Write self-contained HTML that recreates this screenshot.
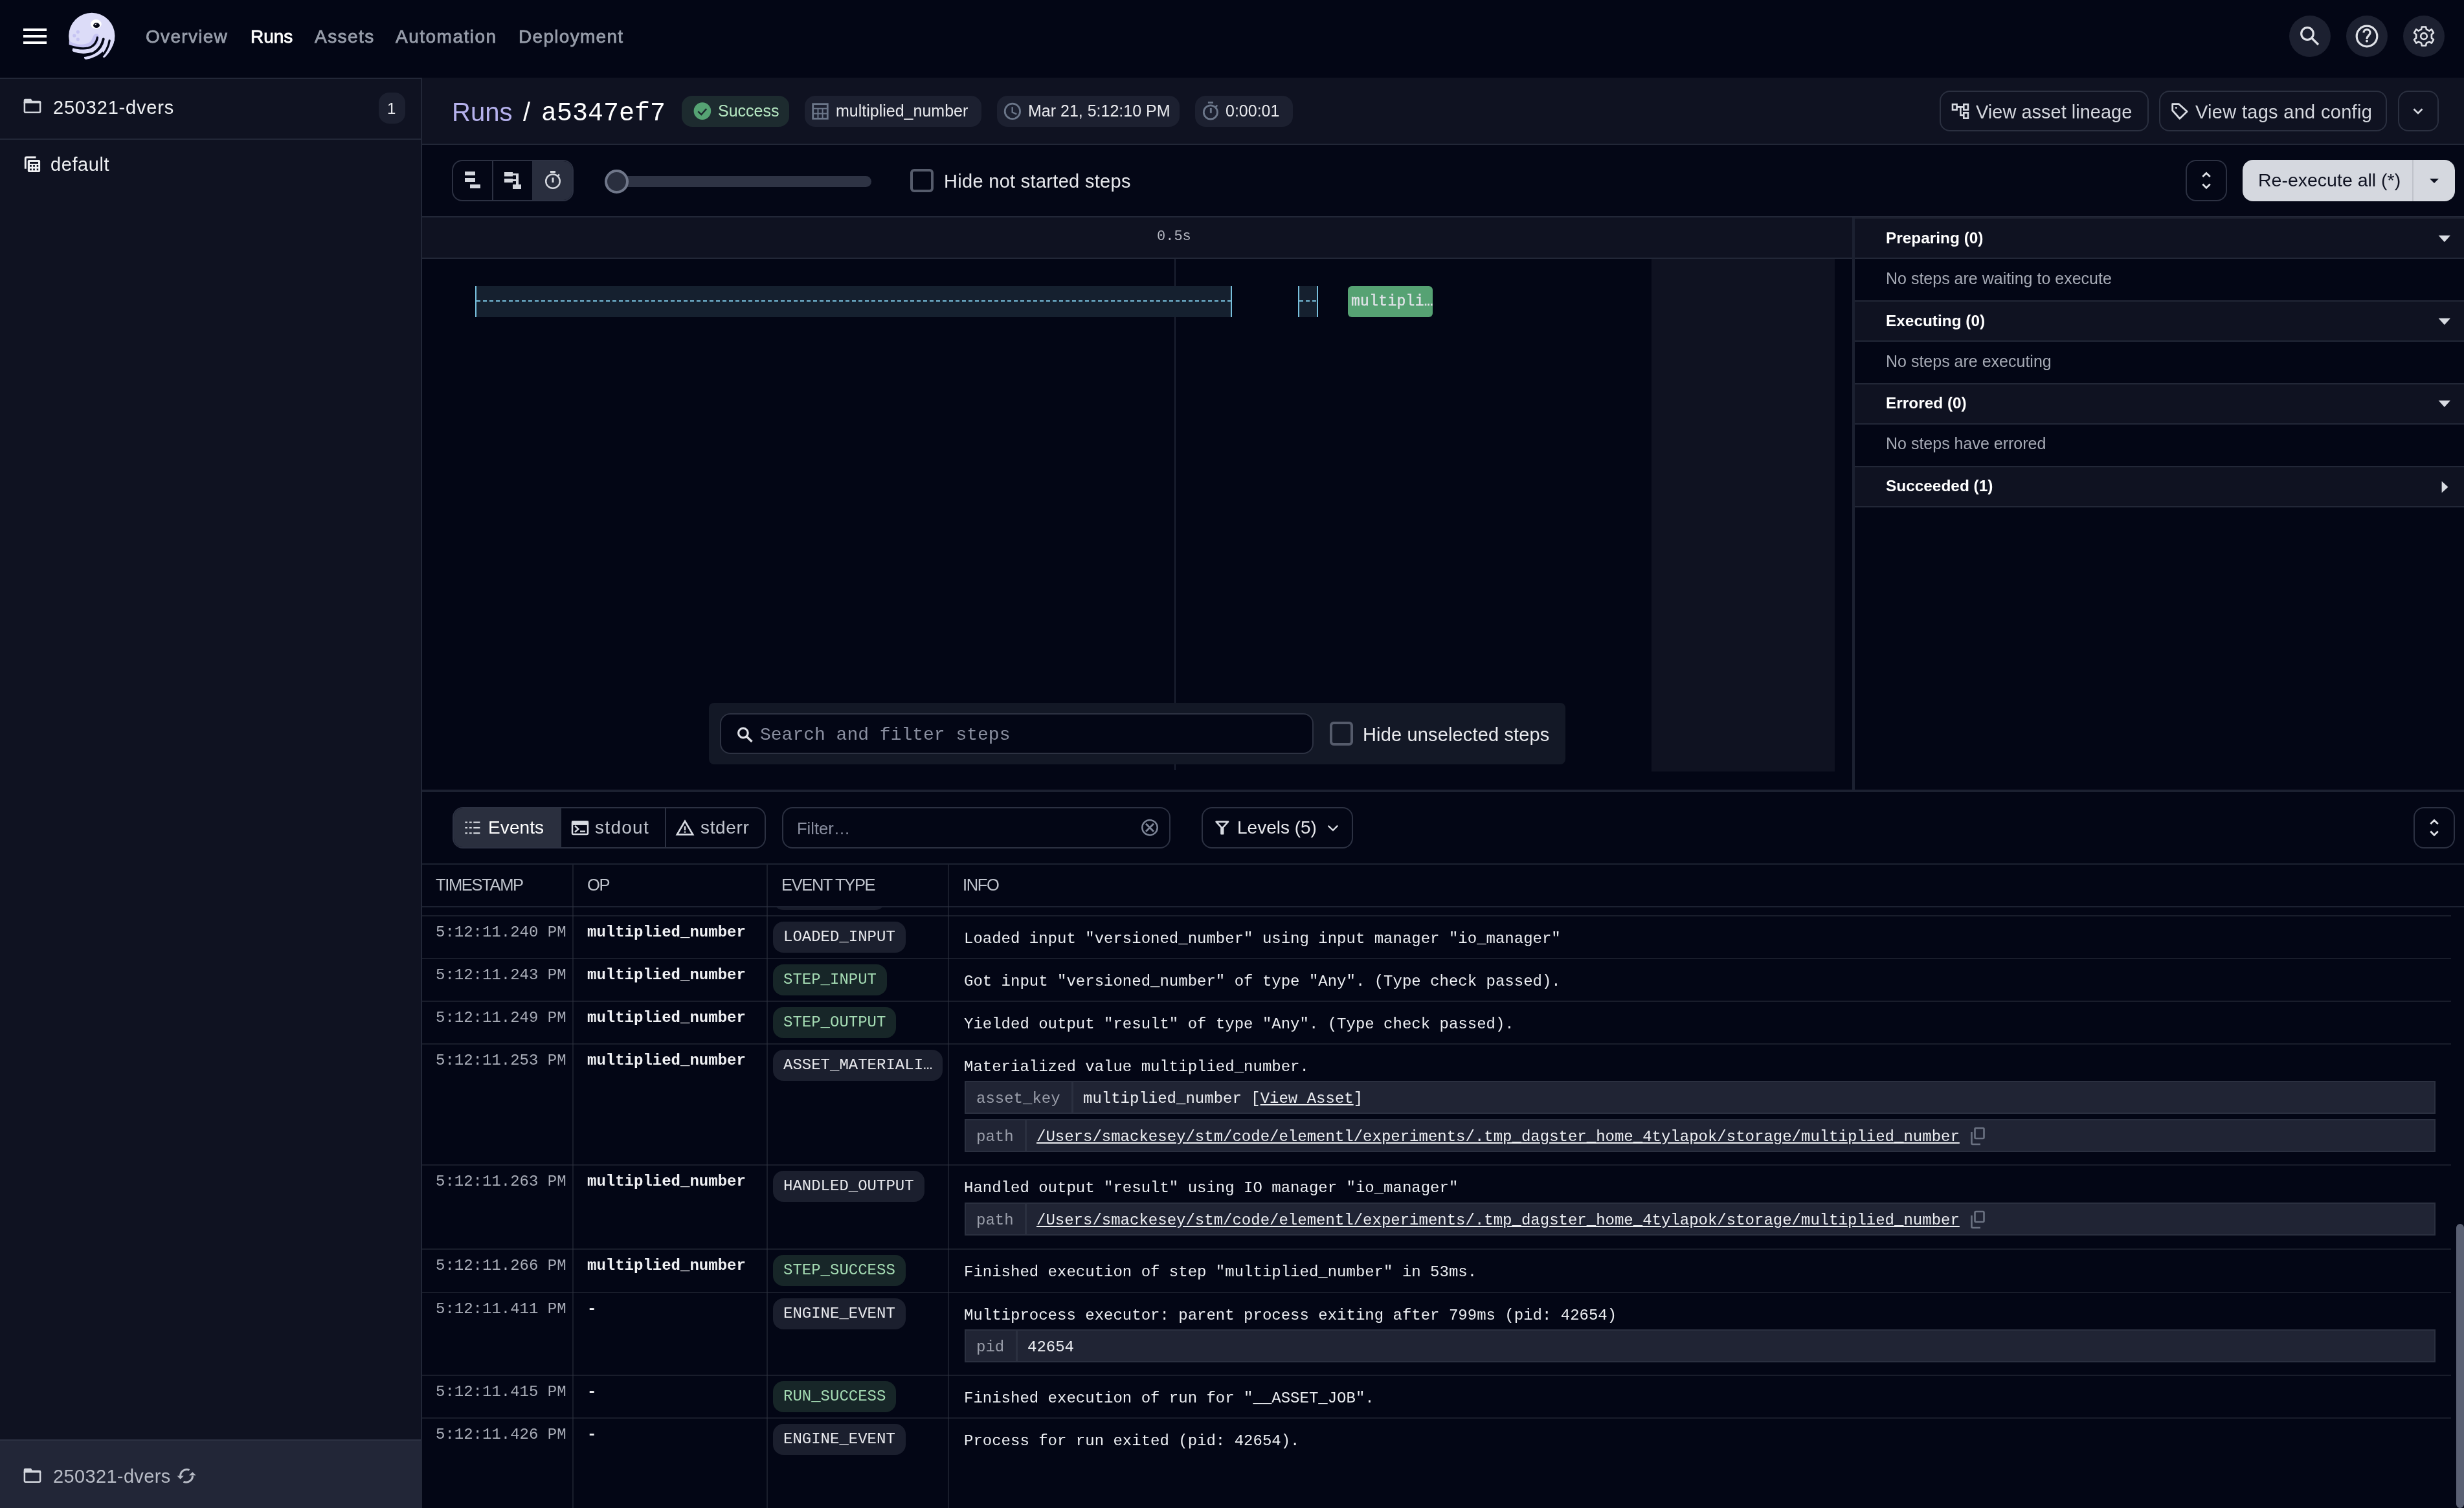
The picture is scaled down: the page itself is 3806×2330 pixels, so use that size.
<!DOCTYPE html>
<html><head><meta charset="utf-8">
<style>
*{box-sizing:border-box;margin:0;padding:0}
html,body{width:3806px;height:2330px;overflow:hidden;background:#030615}
body{position:relative;font-family:"Liberation Sans",sans-serif;color:#e8e9ed}
.a{position:absolute}
.t{position:absolute;line-height:1;white-space:nowrap}
.m{font-family:"Liberation Mono",monospace}
.b{font-weight:bold}
svg{position:absolute;overflow:visible}
.nav{font-size:28px;-webkit-text-stroke:0.8px currentColor}
</style></head><body><div id="root" style="position:absolute;left:0;top:0;width:3806px;height:2330px;overflow:hidden;will-change:transform;background:#030615">

<!-- ===== NAV ===== -->
<div class="a" style="left:0;top:0;width:3806px;height:120px;background:#030615"></div>
<div class="a" style="left:36px;top:44px;width:36px;height:4px;background:#fff"></div>
<div class="a" style="left:36px;top:54px;width:36px;height:4px;background:#fff"></div>
<div class="a" style="left:36px;top:64px;width:36px;height:4px;background:#fff"></div>
<svg style="left:100px;top:14px" width="84" height="84" viewBox="0 0 1508 1508">
<circle cx="750" cy="745" r="640" fill="#dcdcf8"/>
<path d="M120 880 C300 1010 560 1010 690 920 C770 860 760 760 830 700 C880 660 950 690 950 760 L930 1000 L520 1140 L120 1000 Z" fill="#c6c4f3"/>
<path d="M0 990 L140 990 L262 1135 L450 1190 L650 1190 L820 1120 L590 1345 L850 1290 L1050 1150 L1090 1290 L1290 1030 L1508 1030 L1508 1508 L0 1508 Z" fill="#030615"/>
<g fill="none" stroke="#dcdcf8" stroke-linecap="round" stroke-width="104">
<path d="M262 1135 C450 1205 700 1200 880 1080 C990 990 1040 900 1065 790"/>
<path d="M590 1345 C820 1300 1020 1170 1130 1010 C1190 920 1225 860 1240 780"/>
<path d="M1090 1290 C1200 1170 1290 1030 1325 860"/>
</g>
<g fill="none" stroke="#030615" stroke-linecap="round" stroke-width="58">
<path d="M905 790 C880 930 800 1040 650 1080 C480 1115 340 1090 150 1030"/>
<path d="M1072 835 C1040 990 960 1120 820 1205 C720 1265 620 1290 470 1300" stroke-width="70"/>
<path d="M1242 875 C1220 1020 1160 1160 1030 1310"/>
</g>
<circle cx="365" cy="635" r="46" fill="#c6c4f3"/><circle cx="265" cy="735" r="46" fill="#c6c4f3"/><circle cx="365" cy="840" r="46" fill="#c6c4f3"/>
<ellipse cx="868" cy="418" rx="150" ry="130" fill="#ffffff"/>
<ellipse cx="880" cy="452" rx="88" ry="70" fill="#030615"/>
<path d="M820 440 L870 400 L875 445 Z" fill="#ffffff"/>
</svg>
<div class="t nav" style="left:225px;top:43px;letter-spacing:1.3px;color:#979daa">Overview</div>
<div class="t nav" style="left:387px;top:43px;letter-spacing:0px;color:#ffffff">Runs</div>
<div class="t nav" style="left:486px;top:43px;letter-spacing:1.45px;color:#979daa">Assets</div>
<div class="t nav" style="left:611px;top:43px;letter-spacing:1.5px;color:#979daa">Automation</div>
<div class="t nav" style="left:801px;top:43px;letter-spacing:1.3px;color:#979daa">Deployment</div>
<div class="a" style="left:3536px;top:24px;width:64px;height:64px;border-radius:50%;background:#1c2030"></div>
<div class="a" style="left:3624px;top:24px;width:64px;height:64px;border-radius:50%;background:#1c2030"></div>
<div class="a" style="left:3712px;top:24px;width:64px;height:64px;border-radius:50%;background:#1c2030"></div>
<svg style="left:3450px;top:0" width="356" height="120" viewBox="0 0 356 120"><g fill="none" stroke="#dfe1e7" stroke-width="3.2"><circle cx="114" cy="52" r="9.3"/><path d="M120.5 58.5 L131 69"/><circle cx="206" cy="56" r="15.8"/><path d="M201 50.5 C201 44 211 44 211 50.5 C211 55 206 55 206 60"/></g><circle cx="206" cy="63.5" r="2" fill="#dfe1e7"/>
<g transform="translate(294 56) scale(0.88)"><path d="M-3.5 -16.5 H3.5 L4.5 -12 L9.5 -9.5 L13.5 -12 L17 -6 L13.5 -3 V3 L17 6 L13.5 12 L9.5 9.5 L4.5 12 L3.5 16.5 H-3.5 L-4.5 12 L-9.5 9.5 L-13.5 12 L-17 6 L-13.5 3 V-3 L-17 -6 L-13.5 -12 L-9.5 -9.5 L-4.5 -12 Z" fill="none" stroke="#dfe1e7" stroke-width="3" stroke-linejoin="round"/><circle r="5.5" fill="none" stroke="#dfe1e7" stroke-width="3"/></g></svg>

<!-- ===== SIDEBAR ===== -->
<div class="a" style="left:0;top:120px;width:652px;height:2210px;background:#0f1221;border-top:2px solid #222737;border-right:2px solid #222737"></div>
<div class="a" style="left:0;top:214px;width:650px;height:2px;background:#222737"></div>
<svg style="left:30px;top:140px" width="44" height="44" viewBox="0 0 44 44"><path d="M6.7 15 Q6.7 12.8 9 12.8 L18 12.8 L19.8 15.9 L31 15.9 Q33.3 15.9 33.3 18.2 L33.3 19.6 L6.7 19.6 Z" fill="#d4d7de"/><rect x="7.9" y="17" width="24.2" height="16.8" rx="1.2" fill="none" stroke="#d4d7de" stroke-width="2.5"/></svg>
<svg style="left:30px;top:232px" width="44" height="44" viewBox="0 0 44 44"><path d="M9.3 28.7 Q9.3 28 9.3 13 Q9.3 11 11.3 11 L25.5 11" fill="none" stroke="#f0f0f3" stroke-width="2.9"/><path fill="#f0f0f3" fill-rule="evenodd" d="M15 14.9 H30 Q32.1 14.9 32.1 17 V32 Q32.1 34.1 30 34.1 H15 Q12.8 34.1 12.8 32 V17 Q12.8 14.9 15 14.9 Z M16 18.1 V20.9 H29 V18.1 Z M16 23 V25.8 H18.8 V23 Z M21.2 23 V25.8 H23.9 V23 Z M26.7 23 V25.8 H29.2 V23 Z M16 28.6 V31.2 H18.8 V28.6 Z M21.2 28.6 V31.2 H23.9 V28.6 Z M26.7 28.6 V31.2 H29.2 V28.6 Z"/></svg>

<div class="t" style="left:82px;top:152px;font-size:29px;letter-spacing:0.8px;color:#eef0f3">250321-dvers</div>
<div class="a" style="left:585px;top:143px;width:41px;height:48px;border-radius:16px;background:#1c2030"></div>
<div class="t" style="left:598px;top:156px;font-size:24px;color:#e8e9ed">1</div>
<div class="t" style="left:78px;top:240px;font-size:29px;letter-spacing:0.6px;color:#eef0f3">default</div>
<div class="a" style="left:0;top:2224px;width:650px;height:106px;background:#222637;border-top:2px solid #2c3142"></div>
<div class="t" style="left:82px;top:2267px;font-size:29px;letter-spacing:0.35px;color:#b8bcc6">250321-dvers</div>
<svg style="left:30px;top:2256px" width="44" height="44" viewBox="0 0 44 44"><path d="M6.7 15 Q6.7 12.8 9 12.8 L18 12.8 L19.8 15.9 L31 15.9 Q33.3 15.9 33.3 18.2 L33.3 19.6 L6.7 19.6 Z" fill="#d4d7de"/><rect x="7.9" y="17" width="24.2" height="16.8" rx="1.2" fill="none" stroke="#d4d7de" stroke-width="2.5"/></svg>
<svg style="left:262px;top:2256px" width="50" height="50" viewBox="0 0 50 50"><g fill="none" stroke="#b8bcc6" stroke-width="3"><path d="M30.5 15.3 A10 10 0 0 0 16.6 25"/><path d="M21.5 33.3 A10 10 0 0 0 35.5 24"/></g><path d="M11.4 24.3 H21.9 L16.6 29.4 Z M30 23.4 H40.6 L35.4 18.4 Z" fill="#b8bcc6"/></svg>

<!-- ===== HEADER ===== -->
<div class="a" style="left:652px;top:120px;width:3154px;height:104px;background:#0f1221;border-bottom:2px solid #222737"></div>
<div class="t" style="left:698px;top:153px;font-size:40px;color:#b5b1ec">Runs</div>
<div class="t" style="left:808px;top:153px;font-size:40px;color:#ffffff">/</div>
<div class="t m" style="left:836px;top:156px;font-size:40px;color:#ffffff">a5347ef7</div>


<!-- tags -->
<div class="a" style="left:1053px;top:148px;width:166px;height:48px;border-radius:16px;background:#1d2b2f"></div>
<svg style="left:1062px;top:150px" width="44" height="44" viewBox="0 0 44 44"><circle cx="22.9" cy="21.6" r="13.3" fill="#55a373"/><path d="M16.3 22.2 L21.3 27.1 L29.2 18.1" fill="none" stroke="#1d2b2f" stroke-width="2.4"/></svg>
<div class="t" style="left:1109px;top:159px;font-size:25px;color:#b6e8c2">Success</div>
<div class="a" style="left:1243px;top:148px;width:273px;height:48px;border-radius:16px;background:#1c2030"></div>
<svg style="left:1245px;top:150px" width="44" height="44" viewBox="0 0 44 44"><g fill="none" stroke="#6b7689"><rect x="10.7" y="10.7" width="22.6" height="22.6" stroke-width="2.8"/><path d="M10.7 17.8 H33.3 M10.7 25.4 H33.3 M18.5 17.8 V33.3 M25.6 17.8 V33.3" stroke-width="2"/></g></svg>
<div class="t" style="left:1291px;top:159px;font-size:25px;color:#e8e9ed">multiplied_number</div>
<div class="a" style="left:1540px;top:148px;width:282px;height:48px;border-radius:16px;background:#1c2030"></div>
<svg style="left:1542px;top:150px" width="44" height="44" viewBox="0 0 44 44"><g fill="none" stroke="#6b7689"><circle cx="21.9" cy="21.9" r="11.7" stroke-width="2.8"/><path d="M21.7 15.2 V23.5 L28.3 26.4" stroke-width="2.4"/></g></svg>
<div class="t" style="left:1588px;top:159px;font-size:25px;color:#e8e9ed">Mar 21, 5:12:10 PM</div>
<div class="a" style="left:1846px;top:148px;width:151px;height:48px;border-radius:16px;background:#1c2030"></div>
<svg style="left:1848px;top:148px" width="44" height="44" viewBox="0 0 44 44"><g fill="none" stroke="#6b7689"><circle cx="21.9" cy="25.4" r="10.6" stroke-width="2.8"/><path d="M22.3 19 V26.8" stroke-width="2.9"/><path d="M17.9 10.4 H26" stroke-width="2.8"/><path d="M29.5 17.5 L32.3 14.7" stroke-width="2.6"/></g></svg>
<div class="t" style="left:1893px;top:159px;font-size:25px;color:#e8e9ed">0:00:01</div>
<!-- header buttons -->
<div class="a" style="left:2996px;top:140px;width:323px;height:63px;border-radius:16px;border:2px solid #2b3040"></div>
<svg style="left:3006px;top:150px" width="44" height="44" viewBox="0 0 44 44"><g fill="none" stroke="#d8dbe2" stroke-width="2.6"><rect x="10" y="11.2" width="6.6" height="8.4"/><rect x="27.3" y="11.2" width="6.6" height="8.4"/><rect x="27.3" y="24.3" width="6.6" height="8.4"/><path d="M16.6 15.4 H27.3 M22.4 15.4 V27.9 H27.3"/></g></svg>
<div class="t" style="left:3052px;top:159px;font-size:29px;color:#d4d7de">View asset lineage</div>
<div class="a" style="left:3335px;top:140px;width:352px;height:63px;border-radius:16px;border:2px solid #2b3040"></div>
<svg style="left:3345px;top:150px" width="44" height="44" viewBox="0 0 44 44"><path d="M10.7 10.7 H20.5 L33.2 22.2 L21.9 33.3 L10.7 20.8 Z" fill="none" stroke="#d8dbe2" stroke-width="2.8" stroke-linejoin="round"/><circle cx="16.4" cy="16.4" r="1.5" fill="#d8dbe2"/></svg>
<div class="t" style="left:3391px;top:159px;font-size:29px;letter-spacing:0.3px;color:#d4d7de">View tags and config</div>
<div class="a" style="left:3704px;top:140px;width:63px;height:63px;border-radius:16px;border:2px solid #2b3040"></div>
<svg style="left:3715px;top:152px" width="40" height="40" viewBox="0 0 40 40"><path d="M13.5 16.5 L20 23 L26.5 16.5" fill="none" stroke="#d8dbe2" stroke-width="2.6"/></svg>

<!-- ===== GANTT TOOLBAR ===== -->
<div class="a" style="left:652px;top:224px;width:3154px;height:112px;background:#040716;border-bottom:2px solid #222737"></div>
<div class="a" style="left:698px;top:247px;width:188px;height:64px;border-radius:16px;border:2px solid #2c3142;overflow:hidden"><div class="a" style="left:122px;top:0;width:64px;height:60px;background:#292e3e"></div><div class="a" style="left:60px;top:0;width:2px;height:60px;background:#2c3142"></div></div>
<svg style="left:695px;top:244px" width="195" height="70" viewBox="0 0 195 70"><g fill="#d4d7de"><rect x="23" y="21" width="16" height="6"/><rect x="23" y="31" width="16" height="6"/><rect x="31" y="41" width="16" height="6"/><rect x="84" y="22" width="13" height="6.5"/><rect x="84" y="32" width="13" height="6"/><rect x="97" y="41" width="13" height="7"/><rect x="102" y="24" width="4" height="18"/><rect x="97" y="24" width="6" height="3"/><rect x="97" y="33" width="6" height="3"/></g><g fill="none" stroke="#d4d7de"><circle cx="159" cy="36" r="10.8" stroke-width="2.5"/><path d="M159 30.5 V38" stroke-width="3"/><path d="M155 21.5 H163" stroke-width="3"/><path d="M166.5 28 L169 25.5" stroke-width="2.5"/></g></svg>
<div class="a" style="left:956px;top:272px;width:390px;height:17px;border-radius:9px;background:#2e3344"></div>
<div class="a" style="left:934px;top:262px;width:37px;height:37px;border-radius:50%;background:#2a2f3f;border:4px solid #6f7689"></div>
<div class="a" style="left:1406px;top:261px;width:36px;height:36px;border-radius:6px;border:4px solid #555b6b"></div>
<div class="t" style="left:1458px;top:266px;font-size:29px;letter-spacing:0.3px;color:#e8e9ed">Hide not started steps</div>
<div class="a" style="left:3376px;top:247px;width:64px;height:64px;border-radius:16px;border:2px solid #2c3142"></div>
<svg style="left:3380px;top:250px" width="60" height="60" viewBox="0 0 60 60"><path d="M22.3 23.1 L28 17.4 L33.8 23.1 M22.3 34.6 L28 40.2 L33.8 34.6" fill="none" stroke="#e0e2e8" stroke-width="2.8"/></svg>
<div class="a" style="left:3464px;top:247px;width:328px;height:64px;border-radius:16px;background:#d5d8df"></div>
<div class="a" style="left:3726px;top:247px;width:2px;height:64px;background:#bfc2ca"></div>
<div class="t" style="left:3488px;top:264px;font-size:28.5px;color:#0f1221">Re-execute all (*)</div>
<svg style="left:3750px;top:270px" width="20" height="20" viewBox="0 0 20 20"><path d="M3 6 H17 L10 13 Z" fill="#0f1221"/></svg>


<!-- ===== TIMELINE ===== -->
<div class="a" style="left:652px;top:336px;width:2209px;height:64px;background:#0f1221;border-bottom:2px solid #222737"></div>
<div class="t m" style="left:1787px;top:355px;font-size:22px;color:#b6b9c3">0.5s</div>
<div class="a" style="left:2551px;top:400px;width:283px;height:792px;background:#0f1221"></div>
<div class="a" style="left:1814px;top:400px;width:2px;height:790px;background:#1c2131"></div>
<div class="a" style="left:734px;top:442px;width:1169px;height:48px;background:#15202f"></div>
<div class="a" style="left:734px;top:442px;width:2px;height:48px;background:#78bfdc"></div>
<div class="a" style="left:1901px;top:442px;width:2px;height:48px;background:#78bfdc"></div>
<div class="a" style="left:736px;top:464px;width:1165px;height:2px;background:repeating-linear-gradient(90deg,#78bfdc 0 6px,transparent 6px 10px)"></div>
<div class="a" style="left:2005px;top:442px;width:31px;height:48px;background:#15202f"></div>
<div class="a" style="left:2005px;top:442px;width:2px;height:48px;background:#78bfdc"></div>
<div class="a" style="left:2034px;top:442px;width:2px;height:48px;background:#78bfdc"></div>
<div class="a" style="left:2007px;top:464px;width:27px;height:2px;background:repeating-linear-gradient(90deg,#78bfdc 0 6px,transparent 6px 10px)"></div>
<div class="a" style="left:2082px;top:442px;width:131px;height:48px;background:#56a273;border-radius:6px"></div>
<div class="t m" style="left:2087px;top:455px;font-size:23px;letter-spacing:0.3px;color:#e0e3e8;-webkit-text-stroke:0.4px #e0e3e8">multipli…</div>
<!-- search -->
<div class="a" style="left:1095px;top:1086px;width:1323px;height:95px;background:#131826;border-radius:8px"></div>
<div class="a" style="left:1112px;top:1102px;width:917px;height:63px;background:#030615;border:2px solid #2d3242;border-radius:16px"></div>
<svg style="left:1130px;top:1110px" width="40" height="40" viewBox="0 0 40 40"><circle cx="17.9" cy="22.5" r="7.3" fill="none" stroke="#dfe1e7" stroke-width="3.2"/><path d="M23.5 28.3 L31.5 36" stroke="#dfe1e7" stroke-width="3.4"/></svg>
<div class="t m" style="left:1174px;top:1122px;font-size:28px;color:#8a8fa0">Search and filter steps</div>
<div class="a" style="left:2054px;top:1115px;width:36px;height:37px;border-radius:6px;border:4px solid #555b6b"></div>
<div class="t" style="left:2105px;top:1121px;font-size:29px;letter-spacing:0.15px;color:#e8e9ed">Hide unselected steps</div>

<!-- ===== RIGHT PANEL ===== -->
<div class="a" style="left:2861px;top:336px;width:4px;height:886px;background:#1c2131"></div>
<div class="a" style="left:2865px;top:336px;width:941px;height:64px;background:#0f1221;border-top:2px solid #1a1e2d;border-bottom:2px solid #222737"></div>
<div class="a" style="left:2865px;top:400px;width:941px;height:66px;background:#030615;border-bottom:2px solid #222737"></div>
<div class="a" style="left:2865px;top:466px;width:941px;height:62px;background:#0f1221;border-bottom:2px solid #222737"></div>
<div class="a" style="left:2865px;top:528px;width:941px;height:66px;background:#030615;border-bottom:2px solid #222737"></div>
<div class="a" style="left:2865px;top:594px;width:941px;height:62px;background:#0f1221;border-bottom:2px solid #222737"></div>
<div class="a" style="left:2865px;top:656px;width:941px;height:66px;background:#030615;border-bottom:2px solid #222737"></div>
<div class="a" style="left:2865px;top:722px;width:941px;height:62px;background:#0f1221;border-bottom:2px solid #222737"></div>
<div class="t b" style="left:2913px;top:356px;font-size:24.4px;color:#ffffff">Preparing (0)</div>
<div class="t" style="left:2913px;top:418px;font-size:25px;color:#a6aab5">No steps are waiting to execute</div>
<div class="t b" style="left:2913px;top:484px;font-size:24.4px;color:#ffffff">Executing (0)</div>
<div class="t" style="left:2913px;top:546px;font-size:25px;color:#a6aab5">No steps are executing</div>
<div class="t b" style="left:2913px;top:611px;font-size:24.4px;color:#ffffff">Errored (0)</div>
<div class="t" style="left:2913px;top:673px;font-size:25px;color:#a6aab5">No steps have errored</div>
<div class="t b" style="left:2913px;top:739px;font-size:24.4px;color:#ffffff">Succeeded (1)</div>
<svg style="left:3760px;top:358px" width="32" height="22" viewBox="0 0 32 22"><path d="M6.6 5.7 H25 L15.8 16 Z" fill="#d8dbe2"/></svg>
<svg style="left:3760px;top:486px" width="32" height="22" viewBox="0 0 32 22"><path d="M6.6 5.7 H25 L15.8 16 Z" fill="#d8dbe2"/></svg>
<svg style="left:3760px;top:613px" width="32" height="22" viewBox="0 0 32 22"><path d="M6.6 5.7 H25 L15.8 16 Z" fill="#d8dbe2"/></svg>
<svg style="left:3760px;top:740px" width="32" height="32" viewBox="0 0 32 32"><path d="M11.6 3.5 V21.5 L21.5 12.5 Z" fill="#d8dbe2"/></svg>
<!-- split divider -->
<div class="a" style="left:652px;top:1220px;width:3154px;height:4px;background:#1c2131"></div>


<!-- ===== LOGS TOOLBAR ===== -->
<div class="a" style="left:699px;top:1247px;width:484px;height:64px;border-radius:16px;border:2px solid #2c3142;overflow:hidden"><div class="a" style="left:0;top:0;width:166px;height:60px;background:#2a2f3e"></div><div class="a" style="left:326px;top:0;width:2px;height:60px;background:#2c3142"></div></div>
<svg style="left:705px;top:1255px" width="220" height="50" viewBox="0 0 220 50"><g fill="#d8dbe2"><rect x="13.4" y="14.5" width="3.6" height="2.2"/><rect x="20" y="14.5" width="3.7" height="2.2"/><rect x="26.3" y="14.5" width="10.1" height="2.2"/><rect x="13.4" y="22.9" width="3.6" height="2.2"/><rect x="20" y="22.9" width="3.7" height="2.2"/><rect x="26.3" y="22.9" width="10.1" height="2.2"/><rect x="13.4" y="31.2" width="3.6" height="2.2"/><rect x="20" y="31.2" width="3.7" height="2.2"/><rect x="26.3" y="31.2" width="10.1" height="2.2"/></g>
<g transform="translate(177 0)"><rect x="2" y="14.5" width="24" height="19.5" rx="1.8" fill="none" stroke="#d8dbe2" stroke-width="2.5"/><rect x="1" y="13.4" width="26" height="6.5" fill="#d8dbe2"/><path d="M6 21 L11.4 26 L6 30.5" fill="none" stroke="#d8dbe2" stroke-width="2.4"/><rect x="14" y="28.4" width="8" height="2.4" fill="#d8dbe2"/></g></svg>
<div class="t" style="left:754px;top:1265px;font-size:28px;letter-spacing:0.1px;color:#ffffff">Events</div>
<div class="t" style="left:919px;top:1265px;font-size:28px;letter-spacing:1.3px;color:#c0c4cd">stdout</div>
<svg style="left:1030px;top:1255px" width="50" height="50" viewBox="0 0 50 50"><path d="M15.9 34.4 L28 13.8 L40.1 34.4 Z" fill="none" stroke="#d8dbe2" stroke-width="2.7" stroke-linejoin="miter"/><rect x="26.8" y="21.6" width="2.4" height="6.4" fill="#d8dbe2"/><rect x="26.8" y="29.5" width="2.4" height="2.2" fill="#d8dbe2"/></svg>
<div class="t" style="left:1082px;top:1265px;font-size:28px;letter-spacing:0.65px;color:#c0c4cd">stderr</div>
<div class="a" style="left:1208px;top:1247px;width:600px;height:64px;border-radius:16px;border:2px solid #2c3142"></div>
<div class="t" style="left:1231px;top:1268px;font-size:25.5px;color:#8a8fa0">Filter…</div>
<svg style="left:1755px;top:1255px" width="44" height="44" viewBox="0 0 44 44"><circle cx="21" cy="23.7" r="11.7" fill="none" stroke="#7d8597" stroke-width="2.5"/><path d="M15 17.8 L27 29.8 M27 17.8 L15 29.8" stroke="#7d8597" stroke-width="2.9"/></svg>
<div class="a" style="left:1856px;top:1247px;width:234px;height:64px;border-radius:16px;border:2px solid #2c3142"></div>
<svg style="left:1866px;top:1260px" width="44" height="40" viewBox="0 0 44 40"><path d="M12.6 9.6 H31 L21.8 19.8 Z" fill="none" stroke="#d8dbe2" stroke-width="2.6" stroke-linejoin="round"/><rect x="19.2" y="19" width="5.3" height="10.6" rx="1" fill="#d8dbe2"/></svg>
<div class="t" style="left:1911px;top:1265px;font-size:28px;color:#e8e9ed">Levels (5)</div>
<svg style="left:2040px;top:1260px" width="40" height="40" viewBox="0 0 40 40"><path d="M11.6 15.9 L19 22.8 L26.2 15.6" fill="none" stroke="#d8dbe2" stroke-width="2.4"/></svg>
<div class="a" style="left:3728px;top:1247px;width:64px;height:64px;border-radius:16px;border:2px solid #2c3142"></div>
<svg style="left:3732px;top:1250px" width="60" height="60" viewBox="0 0 60 60"><path d="M22.3 23.1 L28 17.4 L33.8 23.1 M22.3 34.6 L28 40.2 L33.8 34.6" fill="none" stroke="#e0e2e8" stroke-width="2.8"/></svg>

<!-- ===== LOG TABLE ===== -->
<div class="a" style="left:652px;top:1334px;width:3154px;height:2px;background:#1c2131"></div>
<div class="a" style="left:652px;top:1400px;width:3154px;height:2px;background:#1c2131"></div>
<div class="t" style="left:673px;top:1355px;font-size:25.5px;letter-spacing:-1.35px;color:#c0c4cd">TIMESTAMP</div>
<div class="t" style="left:907px;top:1355px;font-size:25.5px;letter-spacing:-1.35px;color:#c0c4cd">OP</div>
<div class="t" style="left:1207px;top:1355px;font-size:25.5px;letter-spacing:-1.35px;color:#c0c4cd">EVENT TYPE</div>
<div class="t" style="left:1487px;top:1355px;font-size:25.5px;letter-spacing:-1.35px;color:#c0c4cd">INFO</div>
<div class="a" style="left:884px;top:1336px;width:2px;height:994px;background:rgba(47,52,65,0.5)"></div>
<div class="a" style="left:1184px;top:1336px;width:2px;height:994px;background:rgba(47,52,65,0.5)"></div>
<div class="a" style="left:1464px;top:1336px;width:2px;height:994px;background:rgba(47,52,65,0.5)"></div>
<div class="a" style="left:1194px;top:1358px;width:174px;height:48px;border-radius:16px;background:#181c2b;clip-path:inset(44px 0 0 0)"></div>
<div class="a" style="left:652px;top:1414px;width:3134px;height:2px;background:rgba(47,52,65,0.5)"></div>
<div class="t m" style="left:673px;top:1429px;font-size:24px;color:#a9adb8">5:12:11.240 PM</div><div class="t m b" style="left:907px;top:1429px;font-size:24px;color:#f0f1f4">multiplied_number</div><div class="t m" style="left:1194px;top:1424px;height:48px;line-height:48px;padding:0 16px;border-radius:16px;font-size:24px;background:#1b1f2e;color:#e8e9ed">LOADED_INPUT</div><div class="t m" style="left:1489px;top:1439px;font-size:24px;color:#eceef2">Loaded input "versioned_number" using input manager "io_manager"</div>
<div class="a" style="left:652px;top:1480px;width:3134px;height:2px;background:rgba(47,52,65,0.5)"></div>
<div class="t m" style="left:673px;top:1495px;font-size:24px;color:#a9adb8">5:12:11.243 PM</div><div class="t m b" style="left:907px;top:1495px;font-size:24px;color:#f0f1f4">multiplied_number</div><div class="t m" style="left:1194px;top:1490px;height:48px;line-height:48px;padding:0 16px;border-radius:16px;font-size:24px;background:#172628;color:#a5dcb4">STEP_INPUT</div><div class="t m" style="left:1489px;top:1505px;font-size:24px;color:#eceef2">Got input "versioned_number" of type "Any". (Type check passed).</div>
<div class="a" style="left:652px;top:1546px;width:3134px;height:2px;background:rgba(47,52,65,0.5)"></div>
<div class="t m" style="left:673px;top:1561px;font-size:24px;color:#a9adb8">5:12:11.249 PM</div><div class="t m b" style="left:907px;top:1561px;font-size:24px;color:#f0f1f4">multiplied_number</div><div class="t m" style="left:1194px;top:1556px;height:48px;line-height:48px;padding:0 16px;border-radius:16px;font-size:24px;background:#172628;color:#a5dcb4">STEP_OUTPUT</div><div class="t m" style="left:1489px;top:1571px;font-size:24px;color:#eceef2">Yielded output "result" of type "Any". (Type check passed).</div>
<div class="a" style="left:652px;top:1612px;width:3134px;height:2px;background:rgba(47,52,65,0.5)"></div>
<div class="t m" style="left:673px;top:1627px;font-size:24px;color:#a9adb8">5:12:11.253 PM</div><div class="t m b" style="left:907px;top:1627px;font-size:24px;color:#f0f1f4">multiplied_number</div><div class="t m" style="left:1194px;top:1622px;height:48px;line-height:48px;padding:0 16px;border-radius:16px;font-size:24px;background:#1b1f2e;color:#e8e9ed">ASSET_MATERIALI…</div><div class="t m" style="left:1489px;top:1637px;font-size:24px;color:#eceef2">Materialized value multiplied_number.</div>
<div class="a" style="left:1490px;top:1670px;width:2272px;height:51px;background:#202434;border:2px solid #2b3040"></div><div class="a" style="left:1655px;top:1670px;width:3px;height:51px;background:#2b3040"></div><div class="t m" style="left:1508px;top:1686px;font-size:24px;color:#9a9eaa">asset_key</div><div class="t m" style="left:1673px;top:1686px;font-size:24px;color:#eceef2">multiplied_number [<u>View Asset</u>]</div>
<div class="a" style="left:1490px;top:1729px;width:2272px;height:51px;background:#202434;border:2px solid #2b3040"></div><div class="a" style="left:1583px;top:1729px;width:3px;height:51px;background:#2b3040"></div><div class="t m" style="left:1508px;top:1745px;font-size:24px;color:#9a9eaa">path</div><div class="t m" style="left:1601px;top:1745px;font-size:24px;color:#eceef2"><u>/Users/smackesey/stm/code/elementl/experiments/.tmp_dagster_home_4tylapok/storage/multiplied_number</u></div><svg style="left:3042px;top:1741px" width="28" height="30" viewBox="0 0 28 30"><rect x="8.5" y="2" width="14" height="16" rx="1.5" fill="none" stroke="#6b7282" stroke-width="2.6"/><path d="M3.5 8 V25.5 Q3.5 27 5 27 H17" fill="none" stroke="#6b7282" stroke-width="2.6"/></svg>
<div class="a" style="left:652px;top:1799px;width:3134px;height:2px;background:rgba(47,52,65,0.5)"></div>
<div class="t m" style="left:673px;top:1814px;font-size:24px;color:#a9adb8">5:12:11.263 PM</div><div class="t m b" style="left:907px;top:1814px;font-size:24px;color:#f0f1f4">multiplied_number</div><div class="t m" style="left:1194px;top:1809px;height:48px;line-height:48px;padding:0 16px;border-radius:16px;font-size:24px;background:#1b1f2e;color:#e8e9ed">HANDLED_OUTPUT</div><div class="t m" style="left:1489px;top:1824px;font-size:24px;color:#eceef2">Handled output "result" using IO manager "io_manager"</div>
<div class="a" style="left:1490px;top:1858px;width:2272px;height:51px;background:#202434;border:2px solid #2b3040"></div><div class="a" style="left:1583px;top:1858px;width:3px;height:51px;background:#2b3040"></div><div class="t m" style="left:1508px;top:1874px;font-size:24px;color:#9a9eaa">path</div><div class="t m" style="left:1601px;top:1874px;font-size:24px;color:#eceef2"><u>/Users/smackesey/stm/code/elementl/experiments/.tmp_dagster_home_4tylapok/storage/multiplied_number</u></div><svg style="left:3042px;top:1870px" width="28" height="30" viewBox="0 0 28 30"><rect x="8.5" y="2" width="14" height="16" rx="1.5" fill="none" stroke="#6b7282" stroke-width="2.6"/><path d="M3.5 8 V25.5 Q3.5 27 5 27 H17" fill="none" stroke="#6b7282" stroke-width="2.6"/></svg>
<div class="a" style="left:652px;top:1929px;width:3134px;height:2px;background:rgba(47,52,65,0.5)"></div>
<div class="t m" style="left:673px;top:1944px;font-size:24px;color:#a9adb8">5:12:11.266 PM</div><div class="t m b" style="left:907px;top:1944px;font-size:24px;color:#f0f1f4">multiplied_number</div><div class="t m" style="left:1194px;top:1939px;height:48px;line-height:48px;padding:0 16px;border-radius:16px;font-size:24px;background:#172628;color:#a5dcb4">STEP_SUCCESS</div><div class="t m" style="left:1489px;top:1954px;font-size:24px;color:#eceef2">Finished execution of step "multiplied_number" in 53ms.</div>
<div class="a" style="left:652px;top:1996px;width:3134px;height:2px;background:rgba(47,52,65,0.5)"></div>
<div class="t m" style="left:673px;top:2011px;font-size:24px;color:#a9adb8">5:12:11.411 PM</div><div class="t m b" style="left:907px;top:2011px;font-size:24px;color:#f0f1f4">-</div><div class="t m" style="left:1194px;top:2006px;height:48px;line-height:48px;padding:0 16px;border-radius:16px;font-size:24px;background:#1b1f2e;color:#e8e9ed">ENGINE_EVENT</div><div class="t m" style="left:1489px;top:2021px;font-size:24px;color:#eceef2">Multiprocess executor: parent process exiting after 799ms (pid: 42654)</div>
<div class="a" style="left:1490px;top:2054px;width:2272px;height:51px;background:#202434;border:2px solid #2b3040"></div><div class="a" style="left:1569px;top:2054px;width:3px;height:51px;background:#2b3040"></div><div class="t m" style="left:1508px;top:2070px;font-size:24px;color:#9a9eaa">pid</div><div class="t m" style="left:1587px;top:2070px;font-size:24px;color:#eceef2">42654</div>
<div class="a" style="left:652px;top:2124px;width:3134px;height:2px;background:rgba(47,52,65,0.5)"></div>
<div class="t m" style="left:673px;top:2139px;font-size:24px;color:#a9adb8">5:12:11.415 PM</div><div class="t m b" style="left:907px;top:2139px;font-size:24px;color:#f0f1f4">-</div><div class="t m" style="left:1194px;top:2134px;height:48px;line-height:48px;padding:0 16px;border-radius:16px;font-size:24px;background:#172628;color:#a5dcb4">RUN_SUCCESS</div><div class="t m" style="left:1489px;top:2149px;font-size:24px;color:#eceef2">Finished execution of run for "__ASSET_JOB".</div>
<div class="a" style="left:652px;top:2190px;width:3134px;height:2px;background:rgba(47,52,65,0.5)"></div>
<div class="t m" style="left:673px;top:2205px;font-size:24px;color:#a9adb8">5:12:11.426 PM</div><div class="t m b" style="left:907px;top:2205px;font-size:24px;color:#f0f1f4">-</div><div class="t m" style="left:1194px;top:2200px;height:48px;line-height:48px;padding:0 16px;border-radius:16px;font-size:24px;background:#1b1f2e;color:#e8e9ed">ENGINE_EVENT</div><div class="t m" style="left:1489px;top:2215px;font-size:24px;color:#eceef2">Process for run exited (pid: 42654).</div>
<div class="a" style="left:3794px;top:1891px;width:12px;height:439px;border-radius:6px;background:#5a6073"></div>

</div></body></html>
